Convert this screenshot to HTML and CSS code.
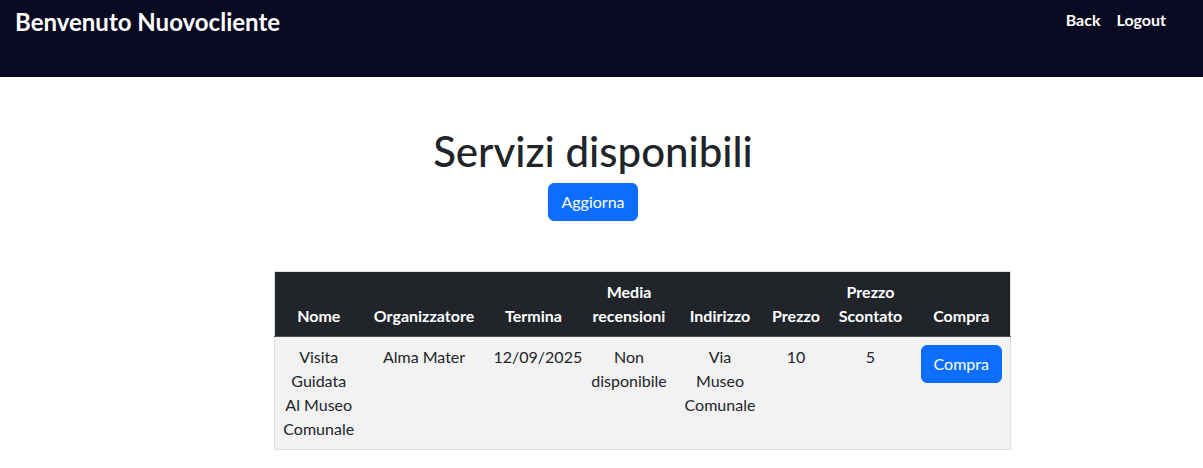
FILE: index.html
```html
<!DOCTYPE html>
<html lang="it">
<head>
<meta charset="utf-8">
<title>Servizi disponibili</title>
<link rel="stylesheet" href="styles.css">
</head>
<body>
<header class="topbar">
  <div class="brand">Benvenuto Nuovocliente</div>
  <nav class="links">
    <a href="#">Back</a>
    <a href="#">Logout</a>
  </nav>
</header>
<main class="content">
  <section class="intro">
    <h1 class="title">Servizi disponibili</h1>
    <button class="btn">Aggiorna</button>
  </section>
  <table class="services">
    <colgroup>
      <col style="width:88px"><col style="width:123px"><col style="width:96px"><col style="width:95px">
      <col style="width:87px"><col style="width:65px"><col style="width:84px"><col style="width:98px">
    </colgroup>
    <thead>
      <tr>
        <th>Nome</th>
        <th>Organizzatore</th>
        <th>Termina</th>
        <th>Media recensioni</th>
        <th>Indirizzo</th>
        <th>Prezzo</th>
        <th>Prezzo Scontato</th>
        <th>Compra</th>
      </tr>
    </thead>
    <tbody>
      <tr>
        <td>Visita Guidata Al Museo Comunale</td>
        <td>Alma Mater</td>
        <td>12/09/2025</td>
        <td>Non disponibile</td>
        <td>Via Museo Comunale</td>
        <td>10</td>
        <td>5</td>
        <td><button class="btn">Compra</button></td>
      </tr>
    </tbody>
  </table>
</main>
</body>
</html>
```
FILE: styles.css
```css
html, body {
  margin: 0;
  padding: 0;
}
body {
  font-family: "Segoe UI", Lato, "Noto Sans", sans-serif;
  font-size: 16px;
  line-height: 24px;
  color: #212529;
  background: #ffffff;
}
.topbar {
  height: 77px;
  background: #090922;
  display: flex;
  justify-content: space-between;
  align-items: flex-start;
  padding: 0 37px 0 15px;
  box-sizing: border-box;
}
.brand {
  color: #ffffff;
  font-weight: 700;
  font-size: 24px;
  line-height: 30px;
  margin-top: 7px;
}
.links {
  display: flex;
  gap: 16px;
  margin-top: 8px;
}
.links a {
  color: #ffffff;
  font-weight: 700;
  font-size: 16px;
  line-height: 24px;
  text-decoration: none;
}
.content {
  display: flex;
  flex-direction: column;
  align-items: flex-start;
  padding-top: 50px;
}
.intro {
  align-self: stretch;
  display: flex;
  flex-direction: column;
  align-items: center;
  padding-right: 17px;
}
.title {
  margin: 0 0 8px 0;
  font-size: 42px;
  line-height: 48px;
  font-weight: 500;
  color: #212529;
}
.btn {
  font-family: inherit;
  font-size: 16px;
  line-height: 24px;
  color: #ffffff;
  background: #0d6efd;
  border: 1px solid #0d6efd;
  border-radius: 6px;
  padding: 6px 12px;
  cursor: pointer;
}
.services {
  margin: 50px 0 0 274px;
  border-collapse: collapse;
  table-layout: fixed;
  width: 736px;
  border: 1px solid #dee2e6;
  text-align: center;
}
.services th {
  background: #212529;
  color: #ffffff;
  font-weight: 700;
  padding: 8px 4px;
  vertical-align: bottom;
  border-bottom: 1px solid #4d5154;
}
.services td {
  background: #f2f2f2;
  padding: 8px;
  vertical-align: top;
}
```
